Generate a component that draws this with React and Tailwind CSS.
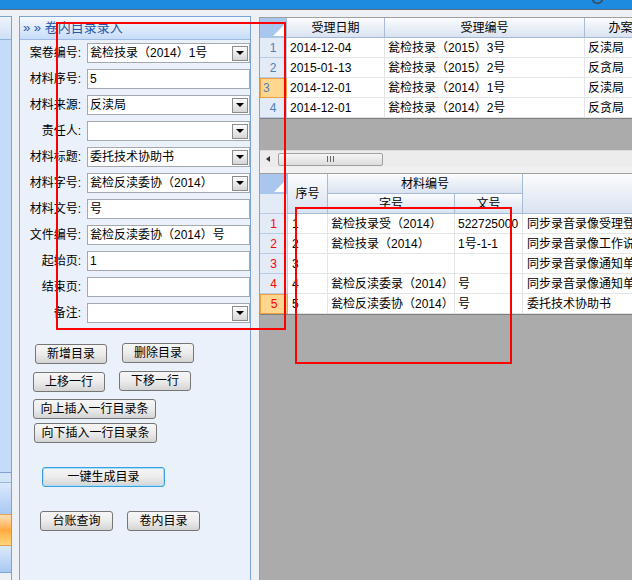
import React from "react";

const fields = [
  { label: "案卷编号", value: "瓮检技录（2014）1号", select: true },
  { label: "材料序号", value: "5" },
  { label: "材料来源", value: "反渎局", select: true },
  { label: "责任人", value: "", select: true },
  { label: "材料标题", value: "委托技术协助书", select: true },
  { label: "材料字号", value: "瓮检反渎委协（2014）", select: true },
  { label: "材料文号", value: "号" },
  { label: "文件编号", value: "瓮检反渎委协（2014）号" },
  { label: "起始页", value: "1" },
  { label: "结束页", value: "" },
  { label: "备注", value: "", select: true },
];

const cases = [
  ["2014-12-04", "瓮检技录（2015）3号", "反渎局"],
  ["2015-01-13", "瓮检技录（2015）2号", "反贪局"],
  ["2014-12-01", "瓮检技录（2014）1号", "反渎局"],
  ["2014-12-01", "瓮检技录（2014）2号", "反贪局"],
];

const items = [
  ["1", "瓮检技录受（2014）", "522725000", "同步录音录像受理登记表"],
  ["2", "瓮检技录（2014）", "1号-1-1", "同步录音录像工作说明"],
  ["3", "", "", "同步录音录像通知单"],
  ["4", "瓮检反渎委录（2014）", "号", "同步录音录像通知单"],
  ["5", "瓮检反渎委协（2014）", "号", "委托技术协助书"],
];

function Dropdown() {
  return (
    <span className="flex h-[15px] w-[16px] shrink-0 items-center justify-center border border-[#8c8c8c] bg-linear-to-b from-[#fdfdfd] to-[#d6d6d6]">
      <svg width="8" height="4" viewBox="0 0 8 4">
        <path d="M0 0h8L4 4z" fill="#000" />
      </svg>
    </span>
  );
}

function Btn({ children, className = "", focus }) {
  return (
    <div
      className={`flex h-[20px] items-center justify-center rounded-[3px] border text-[12px] text-black bg-linear-to-b from-[#f6f6f6] via-[#ececec] to-[#d4d4d4] ${
        focus
          ? "border-[#3aa0e0] shadow-[inset_0_0_0_1px_#a8defa]"
          : "border-[#767676]"
      } ${className}`}
    >
      {children}
    </div>
  );
}

function Corner() {
  return (
    <div className="flex h-[20px] items-end justify-end bg-[#a9c6ec] pb-[2px] pr-[1px]">
      <svg width="12" height="12" viewBox="0 0 12 12">
        <path d="M12 0V12H0z" fill="#fff" />
      </svg>
    </div>
  );
}

function Head({ children, className = "" }) {
  return (
    <div
      className={`flex shrink-0 items-center justify-center overflow-hidden whitespace-nowrap border-b border-r border-[#a7bcd4] bg-linear-to-b from-[#fbfcfe] to-[#d9e3f0] text-[12px] text-black ${className}`}
    >
      {children}
    </div>
  );
}

function Cell({ children, className = "" }) {
  return (
    <div
      className={`flex h-[20px] shrink-0 items-center overflow-hidden whitespace-nowrap border-b border-r border-[#e4e4e4] bg-white pl-[3px] text-[12px] text-black ${className}`}
    >
      {children}
    </div>
  );
}

export default function App() {
  return (
    <div className="relative h-[580px] w-[632px] overflow-hidden bg-[#edf1f6] font-['Liberation_Sans','Noto_Sans_CJK_SC',sans-serif]">
      {/* title bar */}
      <div className="h-[10px] border-b border-[#5d6c7c] bg-[#1d8ce0] pl-[592px]">
        <svg width="11" height="4" viewBox="0 0 11 4">
          <path d="M0 0a5.5 4 0 0 0 11 0h-2a3.5 2.5 0 0 1-7 0z" fill="#3b4a5a" />
        </svg>
      </div>

      <div className="flex h-[570px] pt-[6px]">
        {/* left strip */}
        <div className="flex w-[12px] shrink-0 flex-col border-r border-t border-[#7ea3cf]">
          <div className="h-[23px] border-b border-[#8fb1da] bg-linear-to-b from-[#eef4fc] to-[#cfe0f7]" />
          <div className="h-[433px] border-b border-[#7ea3cf] bg-[#c4dbf9]" />
          <div className="h-[9px] bg-[#d4e4f8]" />
          <div className="h-[32px] border-t border-[#9bb9de] bg-linear-to-b from-[#dbe9fc] to-[#a9c9f3]" />
          <div className="h-[32px] border-y border-[#e3a050] bg-linear-to-b from-[#ffe0b4] via-[#ffab3c] to-[#ffd57a]" />
          <div className="h-[27px] border-b border-[#7ea3cf] bg-linear-to-b from-[#dbe9fc] to-[#a9c9f3]" />
        </div>

        {/* form panel */}
        <div className="ml-[7px] flex w-[232px] shrink-0 flex-col overflow-hidden border-x border-t border-[#7aa3d8] bg-[#eaf1fb]">
          <div className="flex h-[23px] shrink-0 items-center border-b border-[#9dbbe2] bg-linear-to-b from-[#f6f9fe] to-[#c7dcf8] pl-[3px] text-[13px] text-[#2456a8]">
            » » 卷内目录录入
          </div>
          <div className="pt-[3px]">
            {fields.map((f) => (
              <div key={f.label} className="mb-[6px] flex h-[20px] items-center">
                <span className="w-[61px] shrink-0 text-right text-[12px] text-black">
                  {f.label}:
                </span>
                <div className="ml-[6px] flex h-[20px] w-[163px] shrink-0 items-center border border-[#a5a9af] bg-white pl-[2px] pr-[1px]">
                  <span className="flex-1 overflow-hidden whitespace-nowrap text-[12px] text-black">
                    {f.value}
                  </span>
                  {f.select && <Dropdown />}
                </div>
              </div>
            ))}
          </div>

          <div className="flex flex-col pl-[13px] pt-[15px]">
            <div className="ml-[2px] flex gap-[15px]">
              <Btn className="w-[72px]">新增目录</Btn>
              <Btn className="-mt-[1px] w-[72px]">删除目录</Btn>
            </div>
            <div className="mt-[8px] flex gap-[14px]">
              <Btn className="w-[72px]">上移一行</Btn>
              <Btn className="-mt-[1px] w-[72px]">下移一行</Btn>
            </div>
            <Btn className="mt-[7px] w-[123px]">向上插入一行目录条</Btn>
            <Btn className="ml-[1px] mt-[4px] w-[123px]">向下插入一行目录条</Btn>
            <Btn focus className="ml-[9px] mt-[24px] w-[123px]">
              一键生成目录
            </Btn>
            <div className="ml-[7px] mt-[24px] flex gap-[14px]">
              <Btn className="w-[73px]">台账查询</Btn>
              <Btn className="w-[73px]">卷内目录</Btn>
            </div>
          </div>
        </div>

        {/* grids */}
        <div className="ml-[8px] mt-[1px] flex min-w-0 flex-1 flex-col border-l border-t border-[#9f9f9f] bg-[#f0f0f0]">
          {/* grid 1 */}
          <div className="flex h-[20px] shrink-0">
            <div className="w-[27px] shrink-0 border-r border-[#a7bcd4]">
              <Corner />
            </div>
            <Head className="h-[20px] w-[98px]">受理日期</Head>
            <Head className="h-[20px] w-[200px]">受理编号</Head>
            <Head className="h-[20px] w-[96px]">办案单位</Head>
          </div>
          {cases.map((r, i) => (
            <div key={i} className="flex h-[20px] shrink-0">
              <div
                className={`flex h-[20px] w-[27px] shrink-0 items-center text-[12px] ${
                  i === 2
                    ? "border border-[#f0a040] bg-[#ffd68f] pl-[2px] text-[#4f80bb]"
                    : "justify-center border-b border-r border-[#b9cbe2] bg-[#e3ebf6] text-[#4f80bb]"
                }`}
              >
                {i + 1}
              </div>
              <Cell className="w-[98px]">{r[0]}</Cell>
              <Cell className="w-[200px]">{r[1]}</Cell>
              <Cell className="w-[96px]">{r[2]}</Cell>
            </div>
          ))}
          <div className="h-[32px] shrink-0 border-t border-[#7f7f7f] bg-[#ababab]" />
          <div className="flex h-[17px] shrink-0 items-center border-t border-[#dcdcdc] bg-[#ececec]">
            <svg className="ml-[6px]" width="4" height="6" viewBox="0 0 4 6">
              <path d="M4 0V6L0 3z" fill="#333" />
            </svg>
            <div className="ml-[8px] flex h-[13px] w-[105px] items-center justify-center rounded-[2px] border border-[#a0a0a0] bg-linear-to-b from-[#f7f7f7] to-[#dcdcdc]">
              <svg width="7" height="6" viewBox="0 0 7 6">
                <path d="M0.5 0v6M3.5 0v6M6.5 0v6" stroke="#666" />
              </svg>
            </div>
          </div>
          <div className="h-[6px] shrink-0" />

          {/* grid 2 */}
          <div className="flex min-h-0 flex-1 flex-col border-t border-[#9f9f9f] bg-[#ababab]">
            <div className="flex h-[40px] shrink-0">
              <div className="flex w-[28px] shrink-0 flex-col border-r border-[#a7bcd4]">
                <Corner />
                <div className="h-[20px] border-b border-[#b9cbe2] bg-[#e3ebf6]" />
              </div>
              <Head className="h-[40px] w-[40px]">序号</Head>
              <div className="flex w-[195px] shrink-0 flex-col">
                <Head className="h-[20px] w-[195px]">材料编号</Head>
                <div className="flex">
                  <Head className="h-[20px] w-[127px]">字号</Head>
                  <Head className="h-[20px] w-[68px]">文号</Head>
                </div>
              </div>
              <Head className="h-[40px] w-[120px]" />
            </div>
            {items.map((r, i) => (
              <div key={i} className="flex h-[20px] shrink-0">
                <div
                  className={`flex h-[20px] w-[28px] shrink-0 items-center justify-center text-[12px] text-[#ff0000] ${
                    i === 4
                      ? "border border-[#f0a040] bg-[#ffd68f]"
                      : "border-b border-r border-[#b9cbe2] bg-[#e3ebf6]"
                  }`}
                >
                  {i + 1}
                </div>
                <Cell className="w-[40px] pl-[4px]">{r[0]}</Cell>
                <Cell className="w-[127px]">{r[1]}</Cell>
                <Cell className="w-[68px]">{r[2]}</Cell>
                <Cell className="w-[120px] pl-[4px]">{r[3]}</Cell>
              </div>
            ))}
            <div className="border-t border-[#7f7f7f]" />
          </div>
        </div>
      </div>

      {/* red annotation frames */}
      <div className="absolute left-[56px] top-[22px] h-[308px] w-[230px] border-2 border-[#ff0000]" />
      <div className="absolute left-[295px] top-[207px] h-[157px] w-[217px] border-2 border-[#ff0000]" />
    </div>
  );
}
